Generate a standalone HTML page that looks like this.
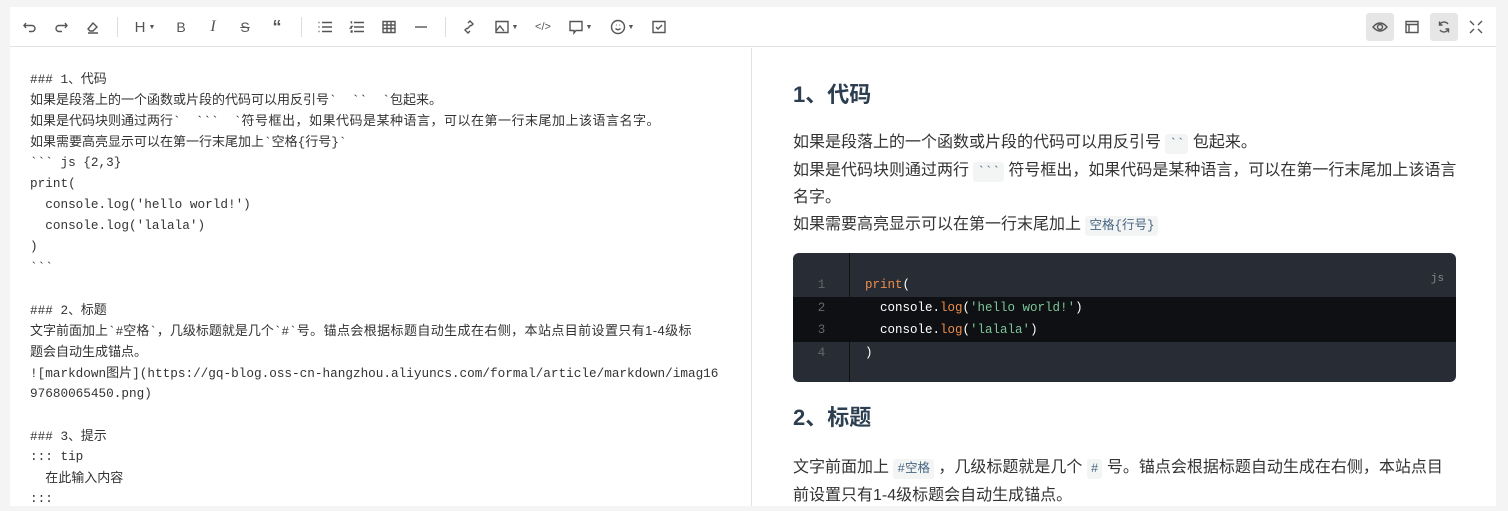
<!DOCTYPE html>
<html><head><meta charset="utf-8"><style>
*{margin:0;padding:0;box-sizing:border-box}
body{width:1508px;height:511px;background:#f4f4f5;overflow:hidden;font-family:"Liberation Sans","Noto Sans CJK SC",sans-serif}
.card{position:absolute;left:10px;top:7px;width:1486px;height:499px;background:#fff;overflow:hidden}
.tb{height:40px;border-bottom:1px solid #e1e1e1;position:relative}
.ic{position:absolute;top:9px;width:22px;height:22px;display:flex;align-items:center;justify-content:center;color:#555}
.ic svg{width:16px;height:16px;fill:none;stroke:#555;stroke-width:1.4}
.sep{position:absolute;top:10px;width:1px;height:20px;background:#ddd}
.act{background:#e6e6e6;border-radius:3px;width:28px;height:28px;top:6px}
.left{position:absolute;left:0;top:41px;width:742px;height:460px;border-right:1px solid #e1e1e1;padding:20px 0 0 20px;font-family:"Liberation Mono","Noto Sans CJK SC",monospace;font-size:12.7px;line-height:21px;color:#333}
.left div{height:21px;white-space:pre;overflow:visible}
.left .cj{font-family:"Liberation Sans","Noto Sans CJK SC",sans-serif;font-size:13px}
.right{position:absolute;left:783px;top:41px;width:663px;color:#333;font-size:16px}
h2{font-size:22px;font-weight:bold;color:#2c3e50;height:30px;line-height:30px}
p{line-height:26.5px}
code{font-family:"Liberation Mono","Noto Sans CJK SC",monospace;font-size:12.5px;background:#f3f4f4;padding:3px 4px;border-radius:3px;color:#476582}
.cb{position:relative;height:129px;background:#282c34;border-radius:6px;margin-top:14px;font-family:"Liberation Mono",monospace;font-size:12.5px;overflow:hidden}
.gut{position:absolute;left:0;top:0;width:57px;height:129px;border-right:1px solid #111}
.ln{position:absolute;left:0;width:663px;height:22.5px;line-height:22.5px;color:#fff;white-space:pre}
.ln .n{position:absolute;left:0;width:57px;text-align:center;color:#666}
.ln .c{position:absolute;left:72px}
.o{color:#f08d49}.g{color:#7ec699}
</style></head><body>
<div class="card">
<div class="tb">
<div class="ic" style="left:9px"><svg viewBox="0 0 16 16"><path d="M4 4L2 6.5 4 9M2 6.5h8a3 3 0 010 6H7"/></svg></div>
<div class="ic" style="left:40px"><svg viewBox="0 0 16 16"><path d="M12 4l2 2.5-2 2.5M14 6.5H6a3 3 0 000 6h3"/></svg></div>
<div class="ic" style="left:72px"><svg viewBox="0 0 16 16"><path d="M3 10l5-6 4 4-4 4H5zM3 14h10"/></svg></div>
<div class="sep" style="left:107px"></div>
<div class="ic" style="left:120px;width:30px;font-size:15px">H<span style="font-size:7px;margin-left:3px">▼</span></div>
<div class="ic" style="left:160px;font-size:14px">B</div>
<div class="ic" style="left:192px;font-size:16px;font-family:'Liberation Serif';font-style:italic">I</div>
<div class="ic" style="left:224px;font-size:14px;text-decoration:line-through">S</div>
<div class="ic" style="left:256px;font-size:18px;font-weight:bold">“</div>
<div class="sep" style="left:291px"></div>
<div class="ic" style="left:304px"><svg viewBox="0 0 16 16"><path d="M5 3.5h10M5 8h10M5 12.5h10M1.5 3.5h1M1.5 8h1M1.5 12.5h1"/></svg></div>
<div class="ic" style="left:336px"><svg viewBox="0 0 16 16"><path d="M5 3.5h10M5 8h10M5 12.5h10M1.5 3h1v1.5M1.5 7.5h1.5l-1.5 1.5h1.5M1.5 12h1.5v1H1.5"/></svg></div>
<div class="ic" style="left:368px"><svg viewBox="0 0 16 16"><path d="M2 2.5h12v11H2zM2 6h12M2 9.5h12M6 2.5v11M10 2.5v11"/></svg></div>
<div class="ic" style="left:400px"><svg viewBox="0 0 16 16"><path d="M2 8h12"/></svg></div>
<div class="sep" style="left:435px"></div>
<div class="ic" style="left:448px"><svg viewBox="0 0 16 16"><path d="M7 4l2-2 3 3-2 2M9 12l-2 2-3-3 2-2M6 10l4-4"/></svg></div>
<div class="ic" style="left:480px;width:32px"><svg viewBox="0 0 16 16"><path d="M2 2.5h12v11H2zM2 12l4-5 4 5"/></svg><span style="font-size:7px;margin-left:2px">▼</span></div>
<div class="ic" style="left:522px;font-size:11px">&lt;/&gt;</div>
<div class="ic" style="left:554px;width:32px"><svg viewBox="0 0 16 16"><path d="M2 2.5h12v9H8l-2 2.5v-2.5H2z"/></svg><span style="font-size:7px;margin-left:2px">▼</span></div>
<div class="ic" style="left:596px;width:32px"><svg viewBox="0 0 16 16"><circle cx="8" cy="8" r="6.5"/><path d="M5.5 9.5q2.5 2.5 5 0M6 6h.5M9.5 6h.5"/></svg><span style="font-size:7px;margin-left:2px">▼</span></div>
<div class="ic" style="left:638px"><svg viewBox="0 0 16 16"><path d="M2 2.5h12v11H2zM5 8l2 2 4-4"/></svg></div>
<div class="ic act" style="left:1356px"><svg viewBox="0 0 16 16"><path d="M1 8q7-8 14 0-7 8-14 0z"/><circle cx="8" cy="8" r="2.5"/></svg></div>
<div class="ic" style="left:1391px"><svg viewBox="0 0 16 16"><path d="M2 2.5h12v11H2zM2 5.5h12M5 5.5v8"/></svg></div>
<div class="ic act" style="left:1420px"><svg viewBox="0 0 16 16"><path d="M12 5a5 5 0 00-8.5 1M4 11a5 5 0 008.5-1M3.5 2.5v3.5h3M12.5 13.5V10h-3"/></svg></div>
<div class="ic" style="left:1455px"><svg viewBox="0 0 16 16"><path d="M2 2l4 4M14 2l-4 4M2 14l4-4M14 14l-4-4"/></svg></div>
</div>
<div class="left">
<div>### 1、<span class="cj">代码</span></div>
<div><span class="cj">如果是段落上的一个函数或片段的代码可以用反引号</span>&#96;  &#96;&#96;  &#96;<span class="cj">包起来。</span></div>
<div><span class="cj">如果是代码块则通过两行</span>&#96;  &#96;&#96;&#96;  &#96;<span class="cj" style="letter-spacing:0.5px">符号框出，如果代码是某种语言，可以在第一行末尾加上该语言名字。</span></div>
<div><span class="cj">如果需要高亮显示可以在第一行末尾加上</span>&#96;<span class="cj">空格</span>{<span class="cj">行号</span>}&#96;</div>
<div>&#96;&#96;&#96; js {2,3}</div>
<div>print(</div>
<div>  console.log('hello world!')</div>
<div>  console.log('lalala')</div>
<div>)</div>
<div>&#96;&#96;&#96;</div>
<div></div>
<div>### 2、<span class="cj">标题</span></div>
<div><span class="cj">文字前面加上</span>&#96;#<span class="cj">空格</span>&#96;<span class="cj">，几级标题就是几个</span>&#96;#&#96;<span class="cj" style="letter-spacing:0.4px">号。锚点会根据标题自动生成在右侧，本站点目前设置只有1-4级标</span></div>
<div><span class="cj">题会自动生成锚点。</span></div>
<div>![markdown<span class="cj">图片</span>](https://gq-blog.oss-cn-hangzhou.aliyuncs.com/formal/article/markdown/imag16</div>
<div>97680065450.png)</div>
<div></div>
<div>### 3、<span class="cj">提示</span></div>
<div>::: tip</div>
<div>  <span class="cj">在此输入内容</span></div>
<div>:::</div>
</div>
<div class="right">
<h2 style="margin-top:32px">1、代码</h2>
<p style="margin-top:20px">如果是段落上的一个函数或片段的代码可以用反引号 <code>&#96;&#96;</code> 包起来。<br><span style="white-space:nowrap">如果是代码块则通过两行 <code>&#96;&#96;&#96;</code> 符号框出，如果代码是某种语言，可以在第一行末尾加上该语言</span><br>名字。<br>如果需要高亮显示可以在第一行末尾加上 <code>空格{行号}</code></p>
<div class="cb"><div class="gut"></div>
<span style="position:absolute;right:12px;top:20px;color:#888;font-size:11px">js</span>
<div class="ln" style="top:21px"><span class="n">1</span><span class="c o">print<span style="color:#fff">(</span></span></div>
<div class="ln" style="top:43.5px;background:#0e1013;height:45px"></div>
<div class="ln" style="top:43.5px"><span class="n">2</span><span class="c">  console.<span class="o">log</span>(<span class="g">'hello world!'</span>)</span></div>
<div class="ln" style="top:66px"><span class="n">3</span><span class="c">  console.<span class="o">log</span>(<span class="g">'lalala'</span>)</span></div>
<div class="ln" style="top:88.5px"><span class="n">4</span><span class="c">)</span></div>
</div>
<h2 style="margin-top:21px">2、标题</h2>
<p style="margin-top:22px">文字前面加上 <code>#空格</code> ，几级标题就是几个 <code>#</code> 号。锚点会根据标题自动生成在右侧，本站点目前设置只有1-4级标题会自动生成锚点。</p>
</div>
</div>
</body></html>
